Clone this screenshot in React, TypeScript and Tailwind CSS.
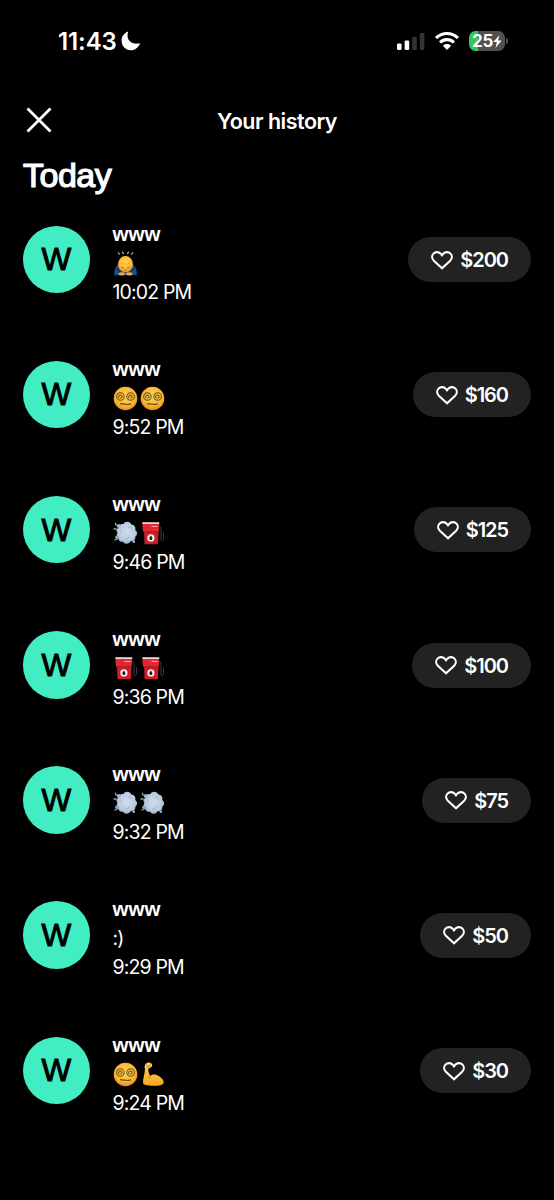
import React from "react";

type EmojiName = "bow" | "dizzy" | "dash" | "fuel" | "muscle";

interface Payment {
  time: string;
  amount: string;
  emojis?: EmojiName[];
  note?: string;
}

const payments: Payment[] = [
  { time: "10:02 PM", amount: "$200", emojis: ["bow"] },
  { time: "9:52 PM", amount: "$160", emojis: ["dizzy", "dizzy"] },
  { time: "9:46 PM", amount: "$125", emojis: ["dash", "fuel"] },
  { time: "9:36 PM", amount: "$100", emojis: ["fuel", "fuel"] },
  { time: "9:32 PM", amount: "$75", emojis: ["dash", "dash"] },
  { time: "9:29 PM", amount: "$50", note: ":)" },
  { time: "9:24 PM", amount: "$30", emojis: ["dizzy", "muscle"] },
];

const Gradients = () => (
  <svg width="0" height="0" className="absolute">
    <defs>
      <radialGradient id="face" cx="50%" cy="40%" r="60%">
        <stop offset="0" stopColor="#ffd44f" />
        <stop offset="0.7" stopColor="#fbb530" />
        <stop offset="1" stopColor="#e58a16" />
      </radialGradient>
      <linearGradient id="arm" x1="0" y1="0" x2="0" y2="1">
        <stop offset="0" stopColor="#ffd54e" />
        <stop offset="1" stopColor="#f5a523" />
      </linearGradient>
      <radialGradient id="cloud" cx="50%" cy="45%" r="60%">
        <stop offset="0" stopColor="#cfdcec" />
        <stop offset="0.7" stopColor="#b9cbdf" />
        <stop offset="1" stopColor="#8ba6c0" />
      </radialGradient>
    </defs>
  </svg>
);

const Emoji = ({ name }: { name: EmojiName }) => (
  <svg width="25" height="25" viewBox="0 0 25 25" fill="none" className="shrink-0">
    {name === "bow" && (
      <>
        <path d="M5 1.5l1.7 1.9M9.5.7l1 2.2M14.5 2.9l1-2.2M18.3 3.4L20 1.5" stroke="#d7d2c8" strokeWidth="1.1" />
        <path d="M6.5 13C2.6 14.5 1 18.5 1.2 24.2h22.6c.2-5.7-1.4-9.7-5.3-11.2z" fill="#1b4f8d" />
        <path d="M3 17l4.5 4M22 17l-4.5 4" stroke="#0e2f5d" strokeWidth="1.3" />
        <ellipse cx="12.5" cy="13.2" rx="7.5" ry="8.2" fill="url(#face)" />
        <path d="M8 13c1-.9 2-1 3.2-.2 1.2.8 3.4.6 5.2-.6" stroke="#eaa52a" strokeWidth=".9" />
        <path d="M8.6 16.6c.8.4 1.5.4 2.2.1M14.2 16.7c.7.3 1.5.3 2.2-.1M11.4 19c.7-.5 1.5-.5 2.2 0" stroke="#8a5718" strokeWidth=".8" />
        <ellipse cx="8.8" cy="22.8" rx="3.3" ry="1.6" fill="#f6ad2b" />
        <ellipse cx="16.2" cy="22.8" rx="3.3" ry="1.6" fill="#f6ad2b" />
      </>
    )}
    {name === "dizzy" && (
      <>
        <circle cx="12.5" cy="12.5" r="11.8" fill="url(#face)" />
        <g stroke="#665126" strokeWidth="1.05">
          <circle cx="7.4" cy="10.5" r="3.8" />
          <path d="M6.2 12.3c-1.5-1.6.2-4 2.1-3 1.6 1 .5 3.2-.9 2.4" />
          <circle cx="17.6" cy="10.5" r="3.8" />
          <path d="M16.2 12.3c-1.5-1.6.2-4 2.1-3 1.6 1 .5 3.2-.9 2.4" />
        </g>
        <path d="M7 17.3c1 .1 1.4 1.2 2.6.6 1-.5 1.6.9 2.8.3 1.2-.7 1.8.8 2.8.2.8-.5 1.4-.7 2.7-.6" stroke="#65441b" strokeWidth="1.2" />
      </>
    )}
    {name === "dash" && (
      <>
        <path d="M4 4.5c-1.3-.5-1.8-1.2-1.6-2.4M3.2 8H1M5.5 17.5L1.8 19" stroke="#8da5bd" strokeWidth="1.3" strokeLinecap="round" />
        <path d="M10.3 3.2C12-.2 17.2.1 18.2 3.6c3.1.1 4.9 2.7 4 5.3 2.6 1.6 2.5 5.3.1 6.7.5 3.1-2 5.1-4.6 4.5-1.4 3.3-6 3.5-7.6.6-3 .8-5.4-1.6-4.3-4.3-2.3-.6-2.8-3.1-1.2-4.6-2-1.5-1.3-4.2.9-4.8C5.6 4.2 7.9 2.6 10.3 3.2z" fill="url(#cloud)" />
        <path d="M15 6.3c1.6-1 3.3-.3 3.5 1.2M12.5 18c1.8.6 3.4-.3 3.5-2M8 8.3c-.9.6-1.1 1.6-.6 2.5" stroke="#9cb5cd" strokeWidth="1" strokeLinecap="round" />
        <circle cx="5.8" cy="5" r="2" fill="#9fb6cc" />
        <circle cx="3.9" cy="16.2" r="1.7" fill="#93acc4" />
        <circle cx="20.8" cy="20.8" r="1.3" fill="#a5bacf" />
      </>
    )}
    {name === "fuel" && (
      <>
        <path d="M18.6 5l2.4 1.8v10.4c0 3.6 2.5 3.2 2.5.2v-6" stroke="#3b3c3f" strokeWidth="1" />
        <path d="M4 10h14.6l-.6 12.2q0 1.1-1.1 1.1H5.6q-1.1 0-1.1-1.1z" fill="#ce1c28" />
        <path d="M2.3 1.5h17l-.5 8q0 1.2-1.1 1.2H4q-1.2 0-1.2-1.2z" fill="#df2a34" />
        <path d="M2.4 1.2h16.8v1.7H2.5z" fill="#eed3d4" />
        <path d="M11.5 5.4h6" stroke="#f1b6b8" strokeWidth="1" />
        <path d="M3.8 10.9h14.4" stroke="#981620" strokeWidth=".8" />
        <circle cx="10.9" cy="16.9" r="3.6" fill="#f4eeee" />
        <path d="M10.9 14.6c-.5 1-1.5 1.6-1.5 2.8a1.5 1.5 0 003 0c0-1.2-1-1.8-1.5-2.8z" fill="#211b1c" />
      </>
    )}
    {name === "muscle" && (
      <>
        <path d="M5.7 1.7C7.4.3 10 .2 11.4 1.4c1.4 1.2.8 3.2-.5 3.9L8.3 6.7c-.3 2.3.8 5 1.9 7.2 2.4-2 6-1.9 8.7.1 2.7 1.9 4.9 4.3 4.8 6.4-.2 2.7-5.6 3.5-10.6 3.4-5.5 0-9.9-.5-10.1-3.2-.2-3.7 1.8-8.6 2-13.4-.6-1.9-.5-4 .7-5.5z" fill="url(#arm)" />
        <path d="M10.2 13.9c-.7.7-1 1.5-1.1 2.4M6.9 3.2l1.5 1 2.2-1.2M8.1 4.3l.1 1.8" stroke="#b76c12" strokeWidth=".7" strokeLinecap="round" />
      </>
    )}
  </svg>
);

const StatusBar = () => (
  <div className="flex h-[82px] items-center justify-between pl-[58px] pr-[46px]">
    <div className="flex items-center gap-[4px]">
      <span className="pt-[1px] text-[24px] font-semibold tracking-[-0.1px]">11:43</span>
      <svg width="20" height="20" viewBox="0 0 20 20" fill="white">
        <path d="M7.2.6C5 6.8 8.2 13.7 17 12.5c.8-.1 1.5-.3 2.2-.6C17.7 16.4 14 19.2 9.7 19.2 4.5 19.2.6 15.2.6 10.1.6 5.6 3.2 1.9 7.2.6z" />
      </svg>
    </div>
    <div className="flex items-center">
      <svg width="28" height="17" viewBox="0 0 28 17" fill="white">
        <rect x="0" y="10.5" width="4.6" height="6.5" rx="1.3" />
        <rect x="7.6" y="7.5" width="4.6" height="9.5" rx="1.3" />
        <rect x="15.2" y="3.8" width="4.6" height="13.2" rx="1.3" fill="#343434" />
        <rect x="22.8" y="0" width="4.6" height="17" rx="1.3" fill="#343434" />
      </svg>
      <svg width="24" height="18" viewBox="0 0 24 18" className="ml-[10px]" fill="white">
        <path d="M12 0C7.4 0 3.3 1.8.4 4.6q-.4.4 0 .8L1.8 6.8q.4.4.8 0a13.7 13.7 0 0118.8 0q.4.4.8 0l1.4-1.4q.4-.4 0-.8C20.7 1.8 16.6 0 12 0z" />
        <path d="M12 6c-3 0-5.7 1.1-7.7 3q-.4.4 0 .8l1.5 1.5q.4.4.8 0a8 8 0 0110.8 0q.4.4.8 0l1.5-1.5q.4-.4 0-.8C17.7 7.1 15 6 12 6z" />
        <path d="M12 12c-1.4 0-2.7.5-3.7 1.4q-.4.4 0 .8l3.2 3.2q.5.5 1 0l3.2-3.2q.4-.4 0-.8c-1-.9-2.3-1.4-3.7-1.4z" />
      </svg>
      <div className="ml-[10px] flex h-[20px] w-[36px] items-center justify-center overflow-hidden rounded-[6.5px] bg-[linear-gradient(90deg,#34c759_25%,#505050_25%)]">
        <span className="text-[17px] leading-none font-bold tracking-[-0.3px]">25</span>
        <svg width="9" height="13" viewBox="0 0 9 13" fill="white">
          <path d="M6.5 0L.4 7.1h3.5L2.5 13l6.1-7.5H5z" />
        </svg>
      </div>
      <span className="ml-[1px] h-[6px] w-[2px] rounded-r-full bg-[#505050]" />
    </div>
  </div>
);

const PaymentRow = ({ payment }: { payment: Payment }) => (
  <div className="flex h-[135.2px] items-start">
    <div className="flex size-[67.5px] shrink-0 items-center justify-center rounded-full bg-[#42edc3] pt-[1px] font-['Liberation_Sans',sans-serif] text-[31.5px] text-black [-webkit-text-stroke:1px_black]">
      W
    </div>
    <div className="ml-[22.5px] flex-1">
      <p className="h-[23px] font-['Liberation_Sans',sans-serif] text-[20.5px] leading-[15px] font-bold">www</p>
      <div className="flex h-[29px] items-center gap-[2px] text-[19.5px] tracking-[-0.8px]">
        {payment.emojis?.map((name, index) => <Emoji key={index} name={name} />)}
        {payment.note}
      </div>
      <p className="text-[19.5px] leading-[28px] tracking-[-0.85px]">{payment.time}</p>
    </div>
    <button className="mt-[11.5px] flex h-[45px] items-center gap-[7px] rounded-full bg-[#222222] px-[23px]">
      <svg width="22" height="20" viewBox="0 0 22 20" fill="none" stroke="white" strokeWidth="2.1" strokeLinejoin="miter">
        <path d="M11 18.2L2.6 10.4C.7 8.4.7 5.5 2.5 3.6c2.1-2.2 5.8-1.9 7.6.5l.9 1.2.9-1.2c1.8-2.4 5.5-2.7 7.6-.5 1.8 1.9 1.8 4.8-.1 6.8z" />
      </svg>
      <span className="pt-[1px] text-[20px] leading-[22px] font-semibold tracking-[-1.05px]">{payment.amount}</span>
    </button>
  </div>
);

const App = () => {
  return (
    <main className="h-[1200px] w-[554px] overflow-hidden bg-black font-['Inter','Liberation_Sans',sans-serif] text-white">
      <Gradients />
      <StatusBar />
      <header className="grid h-[76px] grid-cols-[1fr_auto_1fr] items-center px-[23px]">
        <button aria-label="Close" className="pl-[3px]">
          <svg width="26" height="26" viewBox="0 0 26 26" stroke="white" strokeWidth="2.8">
            <path d="M1.5 1.5l23 23M24.5 1.5l-23 23" />
          </svg>
        </button>
        <h1 className="pt-[3px] text-[21.5px] font-semibold tracking-[-0.5px]">Your history</h1>
      </header>
      <section className="pr-[23px] pl-[22.5px]">
        <h2 className="h-[67.5px] pl-[0.5px] font-['Liberation_Sans',sans-serif] text-[34px] leading-[35px] tracking-[-0.5px] [-webkit-text-stroke:1.2px_white]">
          Today
        </h2>
        {payments.map((payment) => (
          <PaymentRow key={payment.time} payment={payment} />
        ))}
      </section>
    </main>
  );
};

export default App;
